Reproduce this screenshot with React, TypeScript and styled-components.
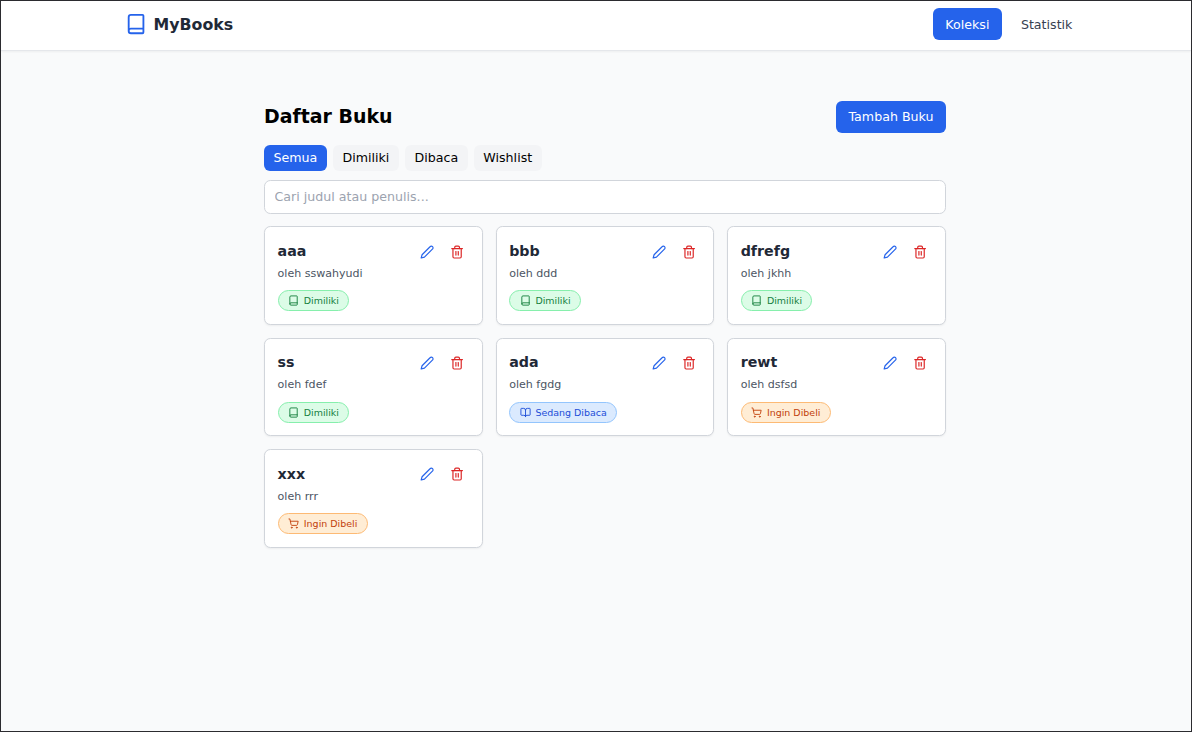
import React from 'react';
import styled, { createGlobalStyle, css } from 'styled-components';
import { Book, BookOpen, ShoppingCart, Trash2 } from 'lucide-react';

const GlobalStyle = createGlobalStyle`
  *, *::before, *::after { box-sizing: border-box; }
  body { margin: 0; background: #f9fafb; font-family: "DejaVu Sans", sans-serif; }
  button, input { font: inherit; }
  h1, h2, p { margin: 0; }
`;

const Page = styled.div`
  height: 732px;
  border: 1px solid #2b2b2f;
  background: #f9fafb;
  overflow: hidden;
`;

const Header = styled.header`
  height: 50px;
  background: #fff;
  border-bottom: 1px solid #e5e7eb;
  box-shadow: 0 1px 2px rgba(0, 0, 0, 0.05);
`;

const HeaderInner = styled.div`
  display: flex;
  align-items: center;
  justify-content: space-between;
  height: 46px;
  padding: 0 106px 0 124px;
`;

const Brand = styled.div`
  display: flex;
  align-items: center;
  gap: 6.4px;
  color: #1f2937;
  font-size: 15.8px;
  font-weight: 700;

  svg { color: #2563eb; }
`;

const BrandName = styled.span`
  line-height: 20px;
  padding-top: 2px;
`;

const Nav = styled.nav`
  display: flex;
  gap: 6.3px;
`;

const NavItem = styled.a<{ $active?: boolean }>`
  height: 32px;
  padding: 0 12.6px;
  border-radius: 6px;
  font-size: 12.64px;
  line-height: 33px;
  color: ${(p) => (p.$active ? '#fff' : '#374151')};
  background: ${(p) => (p.$active ? '#2563eb' : 'transparent')};
`;

const Main = styled.main`
  width: 682px;
  margin: 50px 0 0 263px;
`;

const TitleRow = styled.div`
  display: flex;
  align-items: center;
  justify-content: space-between;
  height: 32px;
  margin-bottom: 12px;
`;

const Title = styled.h1`
  padding-bottom: 2px;
  font-size: 18.96px;
  line-height: 26px;
  color: #000;
`;

const AddButton = styled.button`
  height: 32px;
  padding: 0 12.5px 1px;
  border: 0;
  border-radius: 6px;
  background: #2563eb;
  color: #fff;
  font-size: 12.64px;
`;

const Filters = styled.div`
  display: flex;
  gap: 6.3px;
  margin-bottom: 9px;
`;

const Filter = styled.button<{ $active?: boolean }>`
  height: 26px;
  padding: 0 9.45px 1px;
  border: 0;
  border-radius: 6px;
  font-size: 12.64px;
  color: ${(p) => (p.$active ? '#fff' : '#000')};
  background: ${(p) => (p.$active ? '#2563eb' : '#f3f4f6')};
`;

const Search = styled.input`
  display: block;
  width: 100%;
  height: 34px;
  margin-bottom: 12.4px;
  padding: 0 9.5px 1px;
  border: 1px solid #d1d5db;
  border-radius: 6.4px;
  background: #fff;
  font-size: 12.64px;

  &::placeholder { color: #9ca3af; opacity: 1; }
`;

const Grid = styled.div`
  display: grid;
  grid-template-columns: repeat(3, 1fr);
  gap: 12.65px;
`;

const Card = styled.article`
  height: 98.7px;
  padding: 12.6px;
  border: 1px solid #d1d5db;
  border-radius: 6.4px;
  background: #fff;
  box-shadow: 0 1px 2px rgba(0, 0, 0, 0.05);
`;

const CardTop = styled.div`
  display: flex;
  align-items: center;
  justify-content: space-between;
  height: 24px;
`;

const BookTitle = styled.h2`
  padding-bottom: 2px;
  font-size: 14.22px;
  line-height: 20px;
  color: #1f2937;
`;

const Actions = styled.div`
  display: flex;
  gap: 15.8px;
  padding: 0 5px 0.5px 0;
`;

const IconButton = styled.button<{ $danger?: boolean }>`
  display: flex;
  padding: 0;
  border: 0;
  background: none;
  color: ${(p) => (p.$danger ? '#dc2626' : '#2563eb')};
`;

const Author = styled.p`
  margin-top: 2px;
  font-size: 11.06px;
  line-height: 16px;
  color: #4b5563;
`;

type Status = 'owned' | 'reading' | 'wishlist';

const tones = {
  owned: css`color: #15803d; background: #dcfce7; border-color: #86efac;`,
  reading: css`color: #1d4ed8; background: #dbeafe; border-color: #93c5fd;`,
  wishlist: css`color: #c2410c; background: #ffedd5; border-color: #fdba74;`,
};

const Badge = styled.span<{ $status: Status }>`
  display: inline-flex;
  align-items: center;
  gap: 4.8px;
  height: 21px;
  margin-top: 8.3px;
  padding: 0 9.4px;
  border: 1px solid;
  border-radius: 11px;
  font-size: 9.48px;
  vertical-align: top;
  ${(p) => tones[p.$status]}
`;

const statuses = {
  owned: { label: 'Dimiliki', Icon: Book },
  reading: { label: 'Sedang Dibaca', Icon: BookOpen },
  wishlist: { label: 'Ingin Dibeli', Icon: ShoppingCart },
};

const books: { title: string; author: string; status: Status }[] = [
  { title: 'aaa', author: 'sswahyudi', status: 'owned' },
  { title: 'bbb', author: 'ddd', status: 'owned' },
  { title: 'dfrefg', author: 'jkhh', status: 'owned' },
  { title: 'ss', author: 'fdef', status: 'owned' },
  { title: 'ada', author: 'fgdg', status: 'reading' },
  { title: 'rewt', author: 'dsfsd', status: 'wishlist' },
  { title: 'xxx', author: 'rrr', status: 'wishlist' },
];

function PencilIcon() {
  return (
    <svg width="14.2" height="14.2" viewBox="0 0 24 24" fill="none" stroke="currentColor" strokeWidth="2" strokeLinecap="round" strokeLinejoin="round">
      <path d="M17 3a2.85 2.83 0 1 1 4 4L7.5 20.5 2 22l1.5-5.5Z" />
    </svg>
  );
}

function BookCard({ title, author, status }: (typeof books)[number]) {
  const { label, Icon } = statuses[status];
  return (
    <Card>
      <CardTop>
        <BookTitle>{title}</BookTitle>
        <Actions>
          <IconButton aria-label="Edit"><PencilIcon /></IconButton>
          <IconButton $danger aria-label="Hapus"><Trash2 size={14.2} /></IconButton>
        </Actions>
      </CardTop>
      <Author>oleh {author}</Author>
      <Badge $status={status}><Icon size={11.06} />{label}</Badge>
    </Card>
  );
}

export default function App() {
  return (
    <>
      <GlobalStyle />
      <Page>
        <Header>
          <HeaderInner>
            <Brand><Book size={22.1} /><BrandName>MyBooks</BrandName></Brand>
            <Nav>
              <NavItem $active>Koleksi</NavItem>
              <NavItem>Statistik</NavItem>
            </Nav>
          </HeaderInner>
        </Header>
        <Main>
          <TitleRow>
            <Title>Daftar Buku</Title>
            <AddButton>Tambah Buku</AddButton>
          </TitleRow>
          <Filters>
            <Filter $active>Semua</Filter>
            <Filter>Dimiliki</Filter>
            <Filter>Dibaca</Filter>
            <Filter>Wishlist</Filter>
          </Filters>
          <Search placeholder="Cari judul atau penulis..." />
          <Grid>
            {books.map((b) => <BookCard key={b.title} {...b} />)}
          </Grid>
        </Main>
      </Page>
    </>
  );
}
